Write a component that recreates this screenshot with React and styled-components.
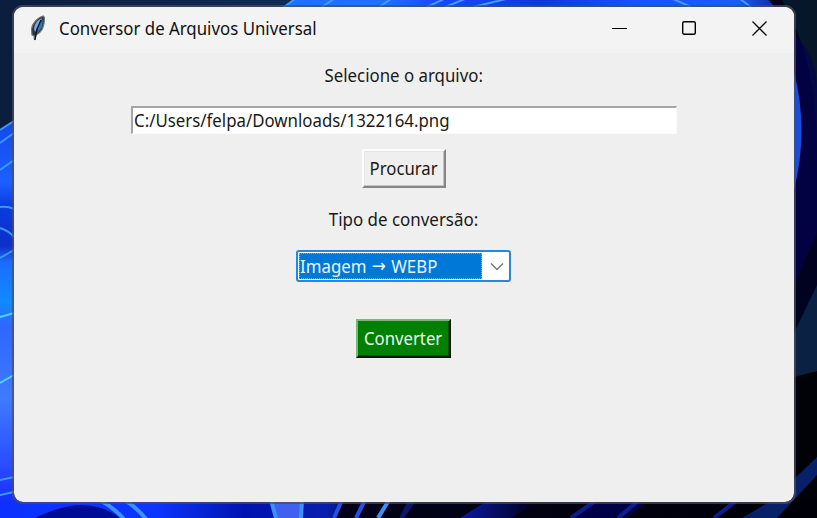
import React from "react";
import styled, { createGlobalStyle } from "styled-components";

const GlobalStyle = createGlobalStyle`
  * { box-sizing: border-box; }
  html, body { margin: 0; height: 100%; overflow: hidden; }
  body { font-family: "Noto Sans", "Open Sans", sans-serif; color: #1a1a1a; }
`;

const Desktop = styled.main`
  position: relative;
  width: 817px;
  height: 518px;
  padding: 5px 21px 14px 12px;
  overflow: hidden;
  background: #0c1f45;
`;

const Wallpaper = styled.svg`
  position: absolute;
  inset: 0;
`;

const Window = styled.section`
  position: relative;
  display: flex;
  flex-direction: column;
  height: 499px;
  border: 2px solid rgba(75, 78, 92, 0.72);
  border-radius: 11px;
  background: #efefef;
  background-clip: padding-box;
  overflow: hidden;
`;

const TitleBar = styled.header`
  display: flex;
  align-items: center;
  flex: 0 0 46px;
  padding: 0 26px 4px 15px;
  background: #f3f3f3;
`;

const Title = styled.h1`
  flex: 1;
  margin: 0 0 0 12px;
  font-size: 18px;
  line-height: 24px;
  font-weight: 400;
  color: #111;
`;

const Controls = styled.div`
  display: flex;
  align-items: center;
  gap: 54px;
`;

const ControlButton = styled.button`
  display: flex;
  width: 16px;
  height: 16px;
  padding: 0;
  border: 0;
  background: none;
`;

const Form = styled.form`
  display: flex;
  flex-direction: column;
  align-items: center;
  padding: 10px 1px 0 0;
`;

const Fitted = styled.span`
  display: inline-block;
  white-space: nowrap;
  transform: scaleX(${(p) => p.$x});
  transform-origin: ${(p) => p.$origin || "center"};
`;

const Label = styled.label`
  height: 24px;
  margin-top: ${(p) => p.$gap || 0}px;
  font-size: 18px;
  line-height: 24px;
`;

const PathField = styled.div`
  width: 546px;
  height: 28px;
  margin: 19px 0 15px;
  padding-left: 1px;
  border: 1px solid #fafafa;
  border-top: 2px solid #a5a5a5;
  border-left: 2px solid #a5a5a5;
  background: #fff;
  font-size: 18px;
  line-height: 25px;
`;

const BrowseButton = styled.button`
  width: 84px;
  height: 39px;
  padding: 0;
  border: 2px solid;
  border-color: #fcfcfc #858585 #858585 #fcfcfc;
  background: #efefef;
  box-shadow: inset -1px -1px #c4c4c4, inset 1px 1px #e5e5e5;
  color: #1a1a1a;
  font: 18px/33px "Noto Sans", sans-serif;
`;

const ConvertButton = styled(BrowseButton)`
  width: 95px;
  margin-top: 37px;
  border-color: #78b878 #041504 #041504 #78b878;
  background: #008000;
  box-shadow: inset -1px -1px #005800;
  color: #ecf8ec;
`;

const Combo = styled.div`
  display: flex;
  width: 215px;
  height: 32px;
  margin-top: 19px;
  padding: 1px;
  border: 2px solid #2389df;
  border-radius: 3px;
  background: #fff;
`;

const Selection = styled.div`
  width: 183px;
  height: 26px;
  border: 1px dotted #f0953f;
  background: #0078d7;
  color: #e9f5ff;
  font-size: 18px;
  line-height: 24px;
`;

const ArrowGlyph = styled.span`
  position: relative;
  top: -1px;
  margin: 0 1px;
  font-family: "DejaVu Sans", sans-serif;
  font-size: 18px;
  line-height: 1;
`;

const Arrow = styled.div`
  display: flex;
  flex: 1;
  align-items: center;
  justify-content: center;
  padding-left: 3px;
`;

function DesktopArt() {
  return (
    <Wallpaper width="817" height="518" viewBox="0 0 817 518" aria-hidden="true">
      <defs>
        <linearGradient id="sky"><stop stopColor="#0b1d3c" /><stop offset=".35" stopColor="#102a58" /><stop offset="1" stopColor="#071629" /></linearGradient>
        <linearGradient id="top"><stop stopColor="#1f6fff" /><stop offset=".2" stopColor="#1f70ff" /><stop offset=".3" stopColor="#1848ff" /><stop offset=".5" stopColor="#0c3ad8" /><stop offset=".7" stopColor="#1555ff" /><stop offset=".88" stopColor="#1a5cf5" /><stop offset="1" stopColor="#06106a" /></linearGradient>
        <linearGradient id="side" x2="0" y2="1">
          <stop stopColor="#1645e8" /><stop offset=".16" stopColor="#1b60ff" /><stop offset=".22" stopColor="#0a3ce0" /><stop offset=".32" stopColor="#0d30c8" /><stop offset=".36" stopColor="#1a6cff" /><stop offset=".46" stopColor="#108aff" /><stop offset=".52" stopColor="#2f66ff" /><stop offset=".7" stopColor="#3f7aff" /><stop offset=".87" stopColor="#2a4cff" /><stop offset="1" stopColor="#0a20ff" />
        </linearGradient>
        <linearGradient id="base"><stop stopColor="#0c31ff" /><stop offset=".19" stopColor="#0c35ff" /><stop offset=".3" stopColor="#0013b0" /><stop offset=".4" stopColor="#0a1fae" /><stop offset=".45" stopColor="#010218" /><stop offset="1" stopColor="#000008" /></linearGradient>
        <linearGradient id="beam"><stop stopColor="#0a18a8" /><stop offset="1" stopColor="#000012" /></linearGradient>
      </defs>
      <path fill="url(#sky)" d="M0 0h817v518H0z" />
      <path fill="url(#top)" d="M280 8L294 0H768Q790 20 800 55H280z" />
      <path fill="#00021f" d="M770 0h12Q817 60 817 150V290L794 334V45z" />
      <path fill="#030351" d="M794 35Q817 55 817 90V232L794 285z" opacity=".7" />
      <path fill="#174fda" d="M794 72Q809 130 794 190z" />
      <path fill="#0a2144" d="M794 333l23-48v87l-23 6z" />
      <path fill="#010108" d="M794 377l23-6v147H794z" />
      <path fill="url(#side)" d="M0 130l20-12v400H0z" />
      <path fill="url(#base)" d="M0 501h817v17H0z" />
      <g fill="none" stroke="#3b98f0" strokeWidth="2">
        <path d="M0 130l14-9M0 143l14-10M0 170l14-10M0 207q8-1 14 2M0 228q9 3 14 9M0 258l14-8M0 480l14-3M0 495l14-3" />
        <path d="M0 317l14-4M0 383l14-8" stroke="#52d0ff" />
      </g>
      <path fill="#000c96" d="M35 518Q62 505 82 505Q105 506 120 518z" />
      <path fill="url(#beam)" d="M460 518l27-17h50l-25 17z" />
      <path fill="#000048" d="M572 518l23-17h54l-23 17z" />
      <path fill="#082068" d="M742 518l29-17 46-44v18l-40 43z" />
      <path fill="#101d80" d="M400 518v-2l8-15h8l-12 17z" opacity=".8" />
      <path fill="#4060f0" d="M270 501h32v17h-26z" />
      <path fill="#000018" d="M334 518l9-17h52l-9 17z" />
      <g fill="none" stroke="#3b92f8" strokeWidth="4">
        <path d="M101 501q12 6 23 18M126 501q10 6 20 18M271 500l5 18M302 500l-1 18M389 500l-11 18" />
        <path d="M342 500l-8 18M365 500l-9 18" stroke="#2450e8" />
      </g>
      <path d="M571 518l24-17M618 518l20-17M714 518l22-17" fill="none" stroke="#0c1d90" strokeWidth="4" />
      <path d="M284 7l11-8M322 7l12-8M379 7l12-8M427 7l17-8M445 7l20-8M473 7l33-8M673-1l18 8M740-1l11 8" fill="none" stroke="#4698fa" strokeWidth="2" />
    </Wallpaper>
  );
}

function Feather() {
  return (
    <svg width="18" height="26" viewBox="0 0 18 26" aria-hidden="true">
      <path d="M14.5 1C8.500 2 3 9 2.500 14l.5 6 2 1 .5 4 1.500-5c5-2 8.500-8 8.500-17z" fill="#27333f" stroke="#777" strokeWidth="1.2" />
      <path d="M13 3C8 5 5 10 5 14l1 3 5-8z" fill="#6caceb" />
      <path d="M14 4l-1 8-5 7 1-7z" fill="#3673b8" />
      <path d="M12 5L8 14l-2 11" fill="none" stroke="#111" strokeWidth="1.3" />
    </svg>
  );
}

export default function App() {
  return (
    <>
      <GlobalStyle />
      <Desktop>
        <DesktopArt />
        <Window>
          <TitleBar>
            <Feather />
            <Title><Fitted $x={0.935} $origin="left">Conversor de Arquivos Universal</Fitted></Title>
            <Controls>
              <ControlButton type="button" aria-label="Minimizar">
                <svg width="16" height="16"><path d="M0 8.5h15" stroke="#000" /></svg>
              </ControlButton>
              <ControlButton type="button" aria-label="Maximizar">
                <svg width="15" height="16"><rect x=".7" y="1.7" width="12.6" height="12.6" rx="1.5" fill="none" stroke="#000" strokeWidth="1.4" /></svg>
              </ControlButton>
              <ControlButton type="button" aria-label="Fechar">
                <svg width="16" height="16"><path d="M.5 1.500l14 14M14.500 1.500l-14 14" stroke="#000" strokeWidth="1.3" /></svg>
              </ControlButton>
            </Controls>
          </TitleBar>
          <Form>
            <Label><Fitted $x={0.935}>Selecione o arquivo:</Fitted></Label>
            <PathField><Fitted $x={0.935} $origin="left">C:/Users/felpa/Downloads/1322164.png</Fitted></PathField>
            <BrowseButton type="button"><Fitted $x={0.93}>Procurar</Fitted></BrowseButton>
            <Label $gap={19}><Fitted $x={0.94}>Tipo de conversão:</Fitted></Label>
            <Combo>
              <Selection><Fitted $x={0.935} $origin="left">Imagem <ArrowGlyph>→</ArrowGlyph> WEBP</Fitted></Selection>
              <Arrow><svg width="14" height="9" viewBox="0 0 14 9"><path d="M1 1.5l6 6 6-6" fill="none" stroke="#777" strokeWidth="1.5" /></svg></Arrow>
            </Combo>
            <ConvertButton type="button"><Fitted $x={0.93}>Converter</Fitted></ConvertButton>
          </Form>
        </Window>
      </Desktop>
    </>
  );
}
